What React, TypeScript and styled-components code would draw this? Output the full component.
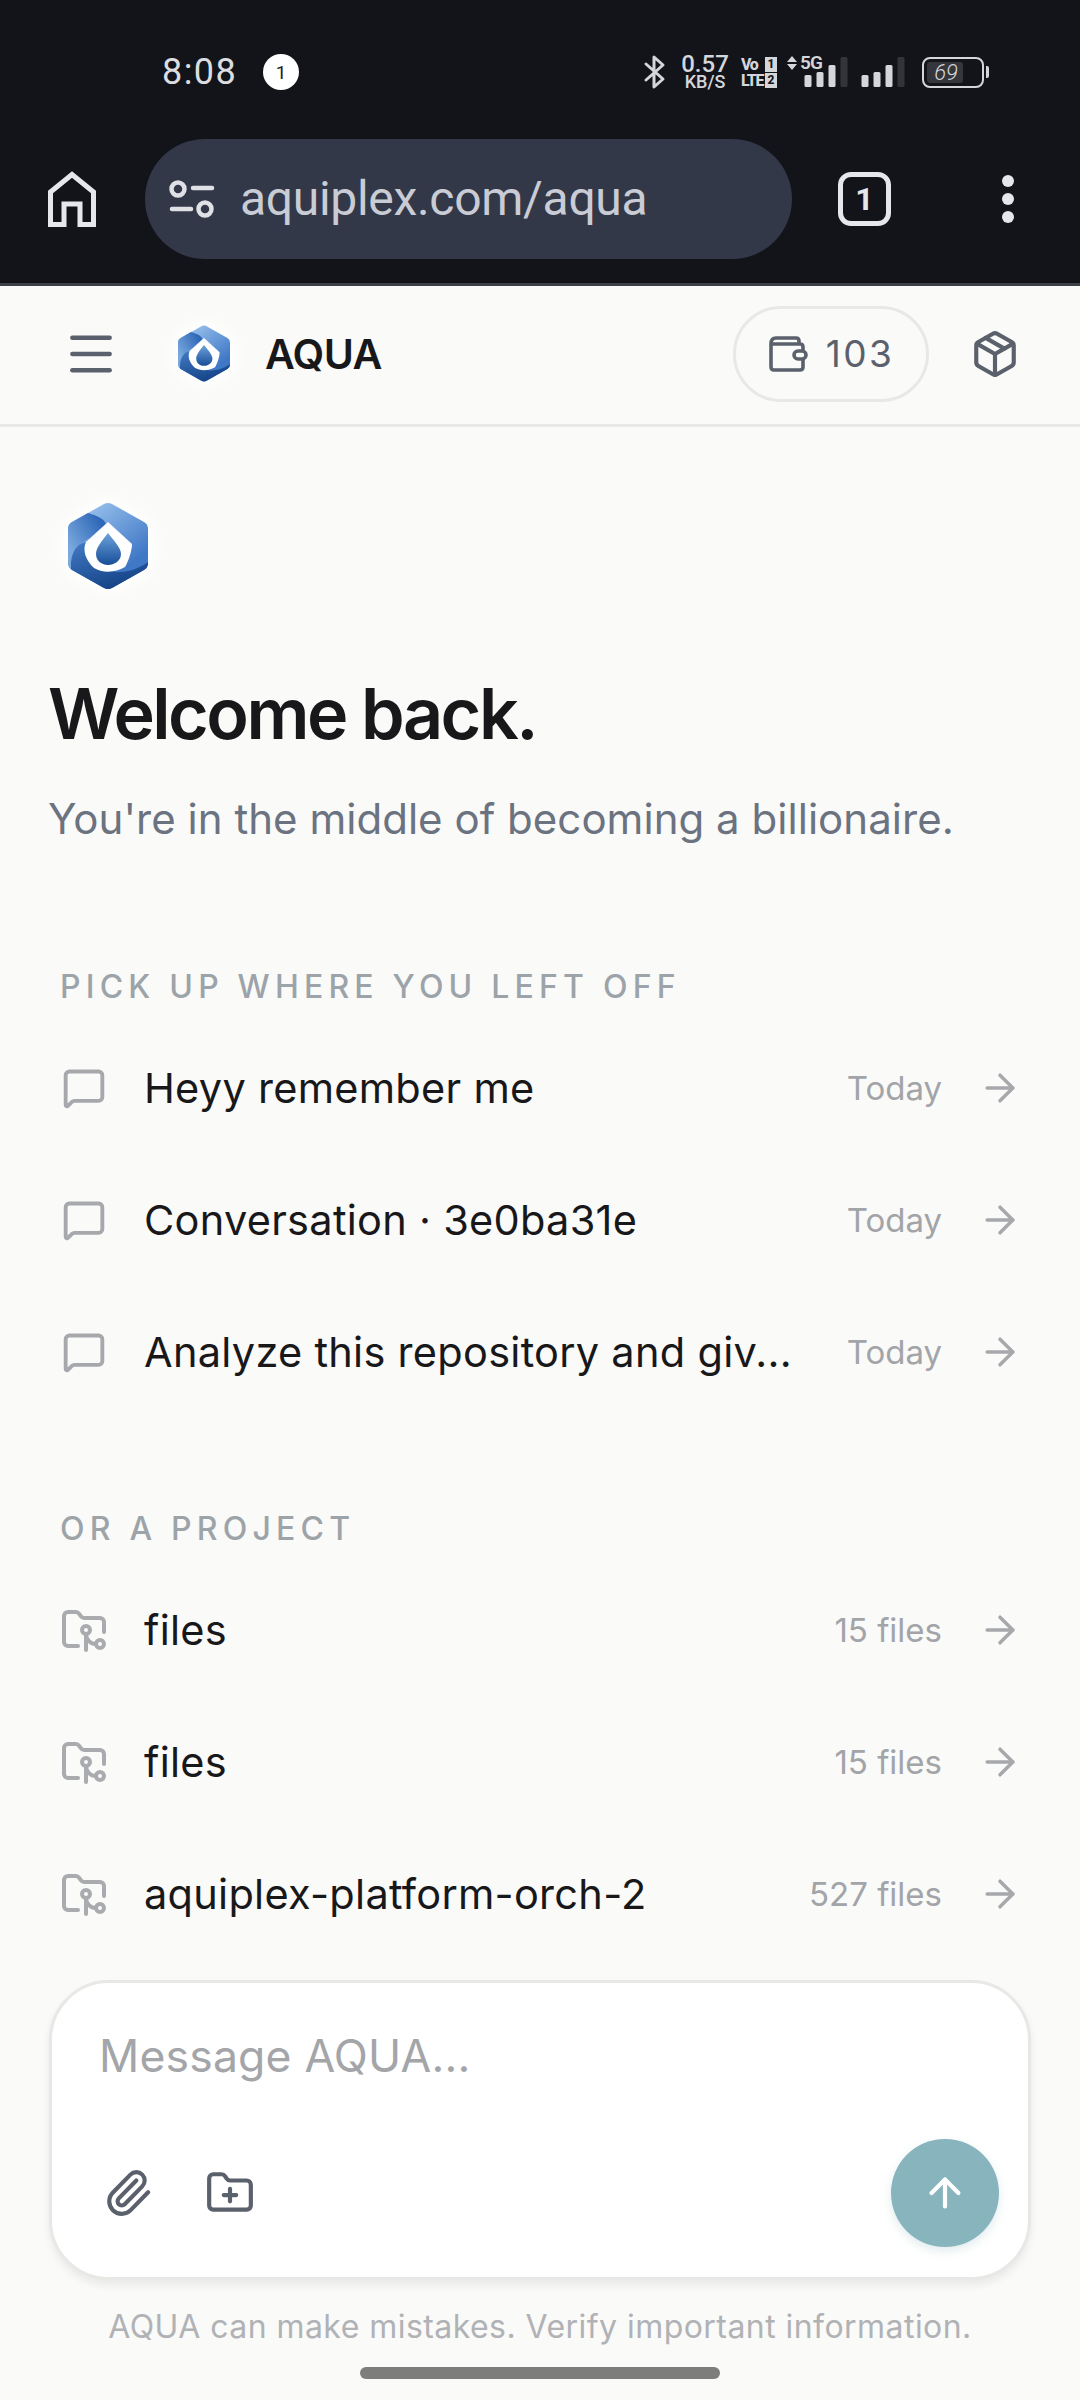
import React from "react";
import styled, { createGlobalStyle } from "styled-components";
import { ArrowRight, ArrowUp, FolderGit2, FolderPlus, Menu, MessageSquare, Package, Paperclip } from "lucide-react";

const Global = createGlobalStyle`
  html, body { margin: 0; padding: 0; background: #fafaf8; }
  * { box-sizing: border-box; }
  #root { width: 1080px; height: 2400px; overflow: hidden; }
`;

const Page = styled.div`
  width: 1080px; height: 2400px; display: flex; flex-direction: column;
  background: #fafaf8; font-family: Inter, "Liberation Sans", sans-serif; color: #18181a;
`;
const Chrome = styled.div`
  flex: none; height: 286px; background: #12141a; border-bottom: 3px solid #3d4046;
  font-family: Roboto, "Liberation Sans", sans-serif; color: #dcdde0;
`;
const StatusBar = styled.div`
  height: 139px; padding: 5px 96px 0 162px; display: flex; align-items: center; justify-content: space-between;
`;
const StatusLeft = styled.div`display: flex; align-items: center; gap: 26px;`;
const Clock = styled.span`font-size: 36px; font-weight: 400; color: #dcdde0; line-height: 1; letter-spacing: 1.4px;`;
const Badge = styled.span`
  width: 36px; height: 36px; border-radius: 50%; background: #fff; color: #222;
  display: flex; align-items: center; justify-content: center; font-size: 19px;
`;
const StatusRight = styled.div`display: flex; align-items: center; color: #d5d6d9; height: 36px;`;
const Speed = styled.div`
  display: flex; flex-direction: column; align-items: center; margin-left: 13px; font-weight: 500; line-height: 1;
  width: 50px;
`;
const SpeedValue = styled.span`font-size: 24px; line-height: 20px;`;
const SpeedUnit = styled.span`font-size: 18px; line-height: 16px; margin-left: 0;`;
const Lte = styled.div`
  display: grid; grid-template-columns: 24px 12px; margin-left: 11px; font-size: 16px; font-weight: 800;
  line-height: 15px; row-gap: 1px; width: 37px;
`;
const LteText = styled.span`display: block; letter-spacing: -1.3px; white-space: nowrap; height: 15px;`;
const LteChip = styled.span`background: #d5d6d9; color: #12141a; font-size: 12px; height: 15px; text-align: center;`;
const Cellular = styled.div`position: relative; margin-left: 9px; padding-left: 17px; display: flex; align-items: flex-end; height: 30px;`;
const FiveGLabel = styled.div`
  position: absolute; left: 0; top: -2px; display: flex; align-items: center; gap: 3px;
  font-size: 19px; font-weight: 600; line-height: 16px; white-space: nowrap; letter-spacing: -0.8px;
`;
const SimGap = styled.span`width: 13px;`;
const Battery = styled.div`
  margin-left: 17px; width: 62px; height: 31px; border: 2px solid #d5d6d9; border-radius: 8px; position: relative;
  display: flex; align-items: center; padding-left: 3px;
`;
const BatteryFill = styled.span`
  width: 36px; height: 21px; background: #34363b; border-radius: 3px; font-size: 22px; line-height: 21px;
  color: #d5d6d9; font-style: italic; text-align: center; padding-left: 2px; white-space: nowrap; font-weight: 300;
`;
const BatteryCap = styled.span`position: absolute; right: -7px; top: 7px; width: 3px; height: 12px; background: #d5d6d9; border-radius: 0 2px 2px 0;`;

const Toolbar = styled.div`
  height: 120px; padding-left: 48px; display: flex; align-items: center; 
`;
const UrlPill = styled.div`
  margin-left: 49px; width: 647px; height: 120px; border-radius: 60px; background: #333848;
  display: flex; align-items: center; padding-left: 24px; gap: 25px;
`;
const UrlText = styled.span`font-size: 48px; color: #c9ccd4; letter-spacing: -0.3px; font-weight: 400; line-height: 1;`;
const TabCount = styled.div`
  margin-left: 46px; width: 53px; height: 54px; border: 5px solid #e6e7ea; border-radius: 13px; color: #e6e7ea;
  display: flex; align-items: center; justify-content: center; font-size: 32px; font-weight: 700;
`;
const Dots = styled.div`margin-left: 111px; display: flex; flex-direction: column; gap: 6px;`;
const Dot = styled.span`width: 12px; height: 12px; border-radius: 50%; background: #e6e7ea;`;

const Header = styled.header`
  flex: none; height: 141px; border-bottom: 3px solid #e8e8e6; padding: 0 60px 3px 63px; display: flex; align-items: center;
`;
const HeaderLogo = styled.div`margin-left: 55px; display: flex;`;
const HeaderTitle = styled.span`font-size: 41px; font-weight: 600; letter-spacing: -0.6px; margin-left: 31px; color: #18181a;`;
const CreditPill = styled.div`
  margin-left: auto; width: 196px; height: 96px; border: 3px solid #e8e8e6; border-radius: 48px;
  display: flex; align-items: center; justify-content: center; gap: 18px;
  font-size: 37px; color: #5b616c; font-weight: 400; letter-spacing: 2.5px;
`;
const CubeWrap = styled.div`margin-left: 41px; display: flex;`;

const Main = styled.main`
  flex: 1; min-height: 0; padding: 69px 49px 0; display: flex; flex-direction: column; overflow: hidden;
`;
const MainLogo = styled.div`display: flex; margin-left: 13px;`;
const Heading = styled.h1`
  margin: 74px 0 0 -1px; font-size: 70px; line-height: 88px; font-weight: 600; letter-spacing: -2.5px; color: #18181a;
`;
const Sub = styled.p`
  margin: 33px 0 0 -1px; font-size: 42px; line-height: 56px; color: #6b7280; letter-spacing: 0.03px;
`;
const SectionLabel = styled.div<{ $top: number }>`
  margin: ${p => p.$top}px 0 0 11px; font-size: 32px; line-height: 40px; color: #9ca3a9; letter-spacing: 5.2px; font-weight: 500;
`;
const List = styled.div`display: flex; flex-direction: column; margin-top: 15px; margin-right: -1px;`;
const Row = styled.div`
  height: 132px; display: flex; align-items: center; padding: 0 10px 0 13px;
`;
const RowIcon = styled.span`
  flex: none; width: 44px; height: 44px; display: flex; align-items: center; justify-content: center;
  svg { flex: none; }
`;
const RowTitle = styled.span`
  margin-left: 38px; font-size: 41.5px; color: #18181a; white-space: nowrap; letter-spacing: 0.28px;
`;
const RowMeta = styled.span`
  margin-left: auto; font-size: 33px; color: #a2a4a8; margin-right: 36px; white-space: nowrap;
`;

const Composer = styled.div`
  flex: none; margin: 0 49px; height: 300px; background: #fff; border-radius: 60px;
  border: 3px solid #e8e8e6; box-shadow: 0 5px 8px rgba(0,0,0,.07); padding: 45px 29px 30px 47px;
  display: flex; flex-direction: column; justify-content: space-between;
`;
const Placeholder = styled.div`font-size: 44.5px; line-height: 56px; color: #a3a5a9; letter-spacing: 0.2px;`;
const ComposerBar = styled.div`display: flex; align-items: center; gap: 52px; padding-left: 4px;`;
const Send = styled.div`
  margin-left: auto; width: 108px; height: 108px; border-radius: 50%; background: #88b4bd; color: #fff;
  display: flex; align-items: center; justify-content: center; box-shadow: 0 4px 10px rgba(136,180,189,.25);
`;
const Footer = styled.div`
  flex: none; height: 120px; text-align: center; padding-top: 26px; position: relative;
  font-size: 32px; line-height: 42px; color: #b0b2b6; letter-spacing: 0.45px;
`;
const HomeBar = styled.span`
  position: absolute; left: 360px; top: 87px; width: 360px; height: 12px; border-radius: 6px; background: #7d7d7b;
`;

const Logo = ({ w, h }: { w: number; h: number }) => {
  const id = `g${w}`;
  return (
    <svg width={w} height={h} viewBox="-6 -6 92 100" style={{ filter: "drop-shadow(0 0 10px #fff) drop-shadow(0 0 6px #fff)", flex: "none" }}>
      <defs>
        <linearGradient id={`${id}a`} x1="0.3" y1="0" x2="0.8" y2="0.7">
          <stop offset="0" stopColor="#97c0ec" />
          <stop offset="1" stopColor="#3f78c6" />
        </linearGradient>
        <linearGradient id={`${id}b`} x1="0.8" y1="0.1" x2="0.1" y2="0.7">
          <stop offset="0" stopColor="#2f68b8" />
          <stop offset="1" stopColor="#7aa9de" />
        </linearGradient>
        <linearGradient id={`${id}c`} x1="0.2" y1="0" x2="0.7" y2="1">
          <stop offset="0" stopColor="#3f77c0" />
          <stop offset="1" stopColor="#123f82" />
        </linearGradient>
        <linearGradient id={`${id}d`} x1="0.5" y1="0" x2="0.5" y2="1">
          <stop offset="0" stopColor="#6da2dc" />
          <stop offset="1" stopColor="#184e98" />
        </linearGradient>
      </defs>
      <path d="M36 2 Q40 0 44 2 L76 20 Q80 22 80 27 L80 61 Q80 66 76 68 L44 86 Q40 88 36 86 L4 68 Q0 66 0 61 L0 27 Q0 22 4 20 Z" fill={`url(#${id}a)`} />
      <path d="M0 27 Q0 22 4 20 L20 11 C30 14 36 17 38 22 L22 36 C12 40 4 50 3 66 Q0 64 0 61 Z" fill={`url(#${id}b)`} />
      <path d="M3 67 C2 50 10 40 20 40 L24 62 C40 72 60 74 80 60 L80 61 Q80 66 76 68 L44 86 Q40 88 36 86 L4 68 Z" fill={`url(#${id}c)`} />
      <path d="M40 20 L64 42 C64 50 59 62 57 65 C47 71 34 71 26 66 C18 59 14 48 18 40 Z" fill="#fff" />
      <path d="M40 31 C47 40 53 46 53 52 C53 59 46 63 40 63 C34 63 28 59 28 52 C28 46 33 40 40 31 Z" fill={`url(#${id}d)`} />
    </svg>
  );
};

const HomeIcon = () => (
  <svg width="48" height="56" viewBox="0 0 48 56" fill="none" stroke="#e6e7ea" strokeWidth="5">
    <path d="M2.5 53.5 V21 L24 3.5 L45.5 21 V53.5 H32 V33 H16 V53.5 Z" />
  </svg>
);
const SiteIcon = () => (
  <svg width="46" height="38" viewBox="0 0 46 38" fill="none" stroke="#dfe1e6" strokeWidth="4.5" strokeLinecap="round">
    <circle cx="9" cy="9" r="6.5" />
    <path d="M24 8 H43" />
    <circle cx="36" cy="29" r="6.5" />
    <path d="M3 29 H22" />
  </svg>
);
const Bt = () => (
  <svg width="24" height="36" viewBox="0 0 24 36" fill="none" stroke="#d5d6d9" strokeWidth="3" strokeLinecap="round" strokeLinejoin="round">
    <path d="M3 10 L20 25 L11 33 V3 L20 11 L3 26" />
  </svg>
);
const UpDown = () => (
  <svg width="10" height="14" viewBox="0 0 10 14" fill="#d5d6d9">
    <path d="M5 0 L10 6 H0 Z M0 8 H10 L5 14 Z" />
  </svg>
);
const Bars = () => (
  <svg width="44" height="30" viewBox="0 0 44 30">
    {[0, 1, 2, 3].map(i => (
      <rect key={i} x={i * 12 + 0.5} y={[18, 15, 8, 0][i]} width="7" height={[12, 15, 22, 30][i]} rx="1.5" fill={i < 3 ? "#d5d6d9" : "#32343a"} />
    ))}
  </svg>
);
const WalletIcon = () => (
  <svg width="40" height="36" viewBox="0 0 40 36" fill="none" stroke="#5b616c" strokeWidth="3.6" strokeLinecap="round" strokeLinejoin="round">
    <path d="M3 8 Q3 2 8 2 H28 Q31 2 31 5 V8 M3 8 H32 Q35 8 35 11 V31 Q35 34 32 34 H6 Q3 34 3 31 Z" />
    <rect x="26" y="15" width="12" height="8" rx="4" fill="#fafaf8" />
  </svg>
);

const chats = ["Heyy remember me", "Conversation · 3e0ba31e", "Analyze this repository and giv..."];
const projects = [
  ["files", "15 files"],
  ["files", "15 files"],
  ["aquiplex-platform-orch-2", "527 files"],
];

export default function App() {
  return (
    <Page>
      <Global />
      <Chrome>
        <StatusBar>
          <StatusLeft>
            <Clock>8:08</Clock>
            <Badge>1</Badge>
          </StatusLeft>
          <StatusRight>
            <Bt />
            <Speed>
              <SpeedValue>0.57</SpeedValue>
              <SpeedUnit>KB/S</SpeedUnit>
            </Speed>
            <Lte>
              <LteText>Vo</LteText><LteChip>1</LteChip>
              <LteText>LTE</LteText><LteChip>2</LteChip>
            </Lte>
            <Cellular>
              <FiveGLabel><UpDown />5G</FiveGLabel>
              <Bars />
            </Cellular>
            <SimGap />
            <Bars />
            <Battery>
              <BatteryFill>69</BatteryFill>
              <BatteryCap />
            </Battery>
          </StatusRight>
        </StatusBar>
        <Toolbar>
          <HomeIcon />
          <UrlPill>
            <SiteIcon />
            <UrlText>aquiplex.com/aqua</UrlText>
          </UrlPill>
          <TabCount>1</TabCount>
          <Dots><Dot /><Dot /><Dot /></Dots>
        </Toolbar>
      </Chrome>
      <Header>
        <Menu size={56} color="#5b616c" strokeWidth={1.9} />
        <HeaderLogo><Logo w={60} h={65} /></HeaderLogo>
        <HeaderTitle>AQUA</HeaderTitle>
        <CreditPill>
          <WalletIcon />
          103
        </CreditPill>
        <CubeWrap><Package size={50} color="#5b616c" strokeWidth={2} /></CubeWrap>
      </Header>
      <Main>
        <MainLogo><Logo w={92} h={100} /></MainLogo>
        <Heading>Welcome back.</Heading>
        <Sub>You're in the middle of becoming a billionaire.</Sub>
        <SectionLabel $top={120}>PICK UP WHERE YOU LEFT OFF</SectionLabel>
        <List>
          {chats.map(c => (
            <Row key={c}>
              <RowIcon><MessageSquare size={44} color="#a6a8ac" strokeWidth={2.1} /></RowIcon>
              <RowTitle>{c}</RowTitle>
              <RowMeta>Today</RowMeta>
              <ArrowRight size={44} color="#a6a8ac" strokeWidth={1.9} />
            </Row>
          ))}
        </List>
        <SectionLabel $top={91}>OR A PROJECT</SectionLabel>
        <List>
          {projects.map((p, i) => (
            <Row key={i}>
              <RowIcon><FolderGit2 size={48} color="#a9abae" strokeWidth={2} /></RowIcon>
              <RowTitle>{p[0]}</RowTitle>
              <RowMeta>{p[1]}</RowMeta>
              <ArrowRight size={44} color="#a6a8ac" strokeWidth={1.9} />
            </Row>
          ))}
        </List>
      </Main>
      <Composer>
        <Placeholder>Message AQUA...</Placeholder>
        <ComposerBar>
          <Paperclip size={50} color="#5b616c" strokeWidth={2} />
          <FolderPlus size={50} color="#5b616c" strokeWidth={2} />
          <Send><ArrowUp size={46} strokeWidth={2.2} /></Send>
        </ComposerBar>
      </Composer>
      <Footer>
        AQUA can make mistakes. Verify important information.
        <HomeBar />
      </Footer>
    </Page>
  );
}
